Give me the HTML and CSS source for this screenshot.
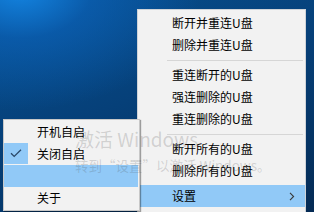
FILE: index.html
```html
<!DOCTYPE html>
<html lang="zh-CN">
<head>
<meta charset="utf-8">
<link rel="stylesheet" href="styles.css">
</head>
<body>
<div class="desktop">
  <div class="menu main-menu">
    <div class="item">断开并重连U盘</div>
    <div class="item">删除并重连U盘</div>
    <div class="sep"></div>
    <div class="item">重连断开的U盘</div>
    <div class="item">强连删除的U盘</div>
    <div class="item">重连删除的U盘</div>
    <div class="sep"></div>
    <div class="item">断开所有的U盘</div>
    <div class="item">删除所有的U盘</div>
    <div class="item active has-sub">设置
      <svg class="arrow" width="6" height="9" viewBox="0 0 6 9"><path d="M1 0.8 L4.6 4.5 L1 8.2" fill="none" stroke="#3a3a3a" stroke-width="1.1"/></svg>
    </div>
  </div>
  <div class="menu sub-menu">
    <div class="item">开机自启</div>
    <div class="item checked">
      <span class="check"><svg width="12" height="9" viewBox="0 0 12 9"><path d="M1 4.2 L4.2 7.4 L11 0.8" fill="none" stroke="#2a4868" stroke-width="1.3"/></svg></span>
      关闭自启
    </div>
    <div class="item active"></div>
    <div class="item">关于</div>
  </div>
  <div class="watermark">
    <div class="wm-title">激活 Windows</div>
    <div class="wm-sub">转到“设置”以激活 Windows。</div>
  </div>
</div>
</body>
</html>
```

FILE: styles.css
```css
html, body {
  margin: 0;
  padding: 0;
}
body {
  width: 314px;
  height: 212px;
  overflow: hidden;
  font-family: "Noto Sans CJK SC", "Microsoft YaHei", sans-serif;
  font-size: 12px;
  color: #000;
}
.desktop {
  position: relative;
  width: 314px;
  height: 212px;
  overflow: hidden;
  background:
    radial-gradient(ellipse 180px 120px at 20px -10px, rgba(20,135,230,0.95) 0%, rgba(12,100,190,0.6) 40%, rgba(8,70,140,0) 100%),
    linear-gradient(160deg, #07508f 0%, #064079 45%, #053566 75%, #042a54 100%);
}
.menu {
  position: absolute;
  background: #f2f2f2;
  border: 1px solid #cfd3d8;
  box-sizing: border-box;
}
.main-menu {
  left: 137px;
  top: 9px;
  width: 169px;
  height: 220px;
  padding-top: 2px;
}
.sub-menu {
  left: 3px;
  top: 119px;
  width: 137px;
  height: 92px;
  padding-top: 1px;
  border-color: #c8c8c8;
  box-shadow: 1px 1px 1px rgba(0,0,0,0.35);
}
.item {
  position: relative;
  height: 22px;
  line-height: 22px;
  white-space: nowrap;
}
.main-menu .item {
  margin: 0 0 0 2px;
  padding-left: 32px;
}
.sub-menu .item {
  padding-left: 33px;
  margin-right: 1px;
}
.main-menu .has-sub {
  margin-top: 3px;
}
.item.active {
  background: #91c9f7;
}
.sep {
  height: 8px;
  display: flex;
  align-items: center;
  padding-left: 29px;
  padding-right: 2px;
}
.sep::before {
  content: "";
  flex: 1;
  height: 1px;
  background: #d6d6d6;
}
.arrow {
  position: absolute;
  right: 10px;
  top: 7px;
}
.check {
  position: absolute;
  left: 0;
  top: 0;
  width: 24px;
  height: 21px;
  background: #91c9f7;
  display: flex;
  align-items: center;
  justify-content: center;
}
.watermark {
  position: absolute;
  left: 75px;
  top: 127px;
  color: rgba(70,70,70,0.2);
  pointer-events: none;
  white-space: nowrap;
}
.wm-title {
  font-family: "Noto Sans CJK SC", sans-serif;
  font-size: 19px;
  line-height: 24px;
}
.wm-sub {
  font-family: "Noto Sans CJK SC", sans-serif;
  font-size: 13.5px;
  line-height: 18px;
  margin-top: 5px;
}
```
